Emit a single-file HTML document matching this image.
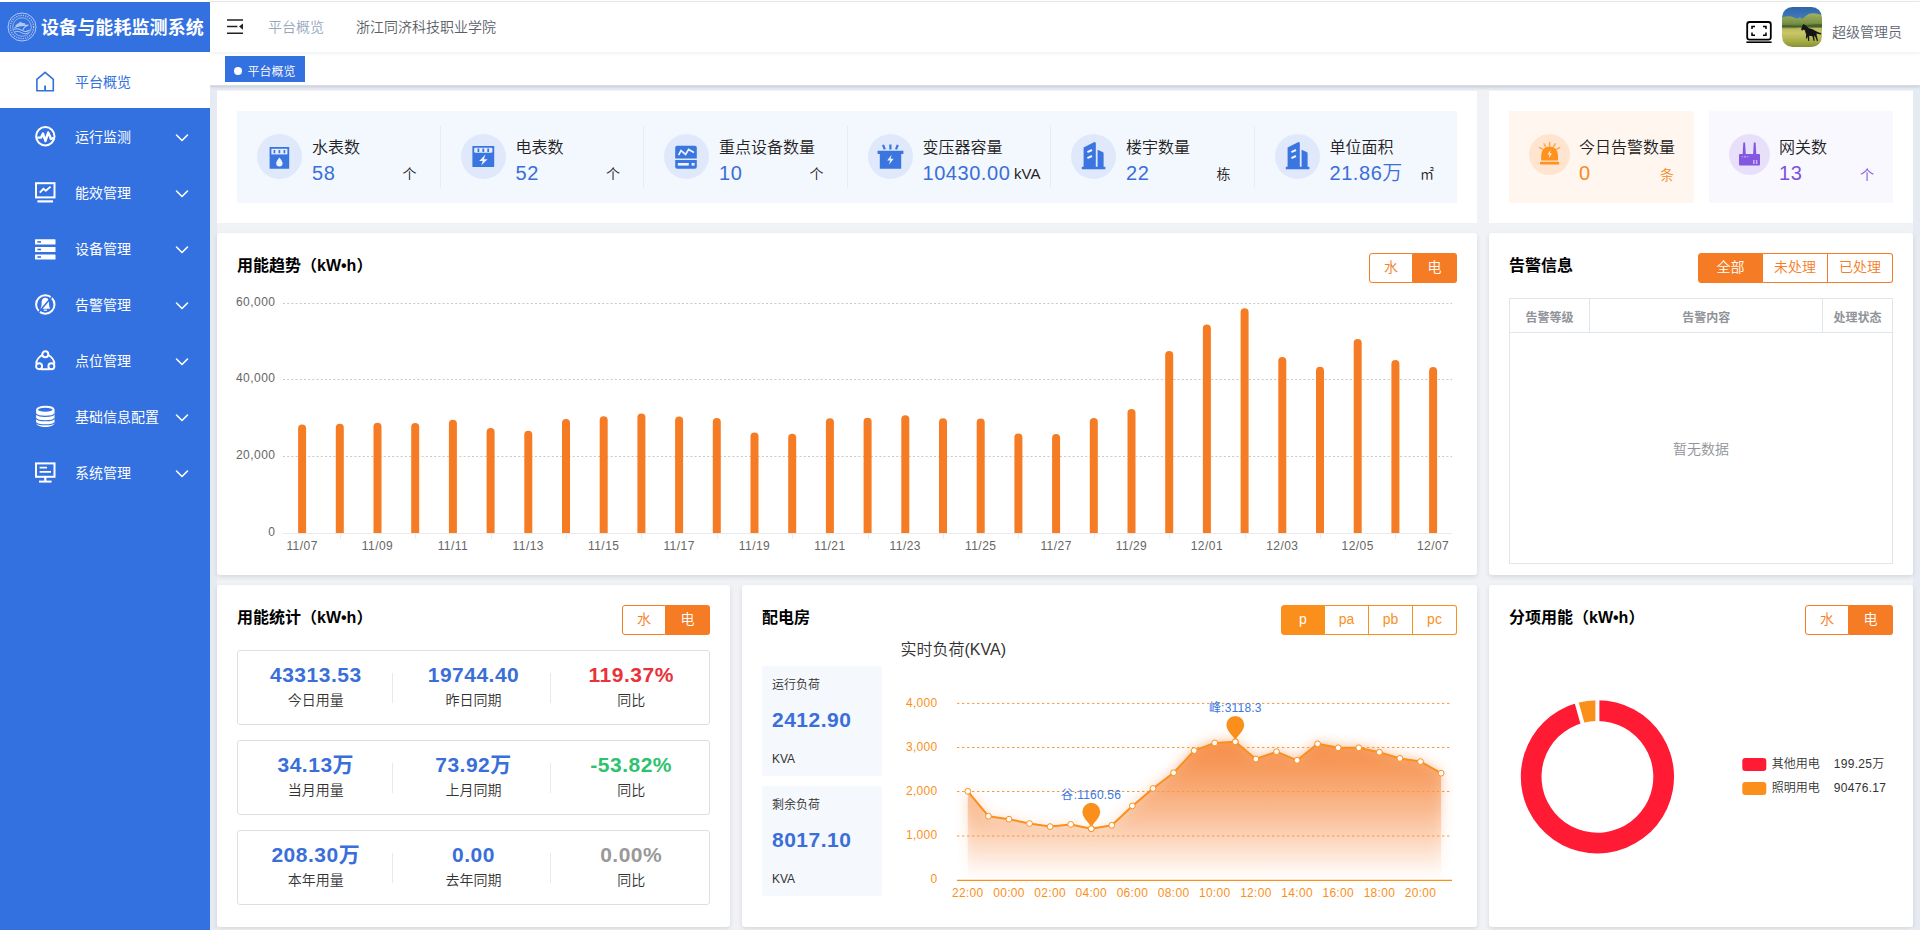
<!DOCTYPE html>
<html lang="zh-CN"><head><meta charset="utf-8"><title>设备与能耗监测系统</title>
<style>
*{box-sizing:border-box;margin:0;padding:0}
html,body{width:1920px;height:930px;overflow:hidden;background:#e6eaf3;}
#mainbg{position:absolute;left:217px;top:90px;width:1696px;height:840px;background:#f0f2f5}
body{font-family:"Liberation Sans","Noto Sans CJK SC",sans-serif;font-weight:350;color:#333;position:relative;font-size:14px;}
.abs{position:absolute}
#topline{position:absolute;left:0;top:0;width:1920px;height:2px;background:#fff}#topline i{position:absolute;left:210px;top:1px;width:1710px;height:1px;background:#ebebeb}
#side{position:absolute;left:0;top:2px;width:210px;height:928px;background:#3370e0;z-index:5}
#logo{position:absolute;left:0;top:0;width:210px;height:50px;}
#logo .t{position:absolute;left:41px;top:0.5px;height:50px;line-height:50px;font-size:18px;font-weight:bold;color:#fff;white-space:nowrap;letter-spacing:.1px;}
.mi{position:absolute;left:0;width:210px;height:56px;color:#fff;font-size:14px;line-height:56px;font-weight:400}
.mi .tx{position:absolute;left:75px;top:1px;white-space:nowrap}.mi.act .tx{top:2px}
.mi svg.ic{position:absolute;left:33px;top:16px;width:24px;height:24px}
.mi svg.ar{position:absolute;left:175px;top:24.5px;width:14px;height:10px}
.mi.act{background:#fff;color:#3370e0}
#head{position:absolute;left:210px;top:2px;width:1710px;height:50px;background:#fff;z-index:3;box-shadow:0 1px 4px rgba(0,21,41,.08);}
#tabs{position:absolute;left:210px;top:52px;width:1710px;height:34px;background:#fff;border-bottom:1px solid #d8dce5;box-shadow:0 1px 3px 0 rgba(0,0,0,.12),0 0 3px 0 rgba(0,0,0,.04);}
#tab1{position:absolute;left:15px;top:4px;width:80px;height:26px;background:#3370e0;color:#fff;font-size:12px;line-height:26px;}
#tab1 i{position:absolute;left:9px;top:11px;width:8px;height:8px;border-radius:50%;background:#fff}
#tab1 span{position:absolute;left:22.5px;top:2.5px;white-space:nowrap}
.card{position:absolute;background:#fff;border-radius:3px;box-shadow:0 2px 5px rgba(0,0,0,.11)}
.card.flat{border-radius:0;box-shadow:none}
.ttl{margin-top:1px;position:absolute;font-size:16px;font-weight:bold;color:#000;white-space:nowrap;line-height:24px}
.bg{position:absolute;height:30px;display:flex;font-size:14px;line-height:27px;color:#f57c24;}
.bg span{display:block;border:1px solid #f57c24;border-left-width:0;text-align:center;background:#fff}
.bg span:first-child{border-left-width:1px;border-radius:3px 0 0 3px}
.bg span:last-child{border-radius:0 3px 3px 0}
.bg span.on{background:#f57c24;color:#fff}
</style>
<style>
.sl{font-size:16px;line-height:22px;color:#222;white-space:nowrap}
.sv{font-size:20px;line-height:26px;white-space:nowrap;letter-spacing:.55px}
.su{font-size:14px;line-height:18px;white-space:nowrap}
</style><style>.th{width:80px;text-align:center;font-size:12px;font-weight:bold;color:#909399;line-height:20px;white-space:nowrap}
.nv{width:150px;text-align:center;font-size:21px;font-weight:bold;line-height:26px;white-space:nowrap;letter-spacing:.5px}
.nl{width:150px;text-align:center;font-size:14px;line-height:20px;color:#333;white-space:nowrap}
.nv2{font-size:21px;font-weight:bold;line-height:26px;color:#3a6fd9;white-space:nowrap;letter-spacing:.5px}
.bg2{color:#fb8f1c}.bg2 span{border-color:#fb8f1c}.bg2 span.on{background:#fb8f1c}
</style>

</head>
<body>
<div id="topline"><i></i></div>
<div id="side">
<div id="logo"><svg class="abs" style="left:7px;top:10px;width:30px;height:30px;opacity:.62" viewBox="0 0 30 30" fill="none" stroke="#fff">
<circle cx="15" cy="15" r="14" stroke-width="1"/>
<circle cx="15" cy="15" r="11.6" stroke-width="1.3" stroke-dasharray="1.2 1.1"/>
<circle cx="15" cy="15" r="9.3" stroke-width=".8"/>
<path d="M8 13.6 L12.5 10.6 L13.6 9.6 L14.6 10.8 L17.6 11.2 L19 12.2 L17 13 L10.5 14.2 Z" fill="#fff" stroke="none"/>
<path d="M7.5 15.6 C11 13.2 17 13.6 21.5 13 C18.5 14.2 16.6 15.6 16 18" stroke-width="1.1"/>
<path d="M6.6 17.6 C9.6 16 12.8 17 15 18.4 C17.5 20 20.5 19.6 22.6 18" stroke-width="1.1"/>
<path d="M7.6 20 C10.4 18.6 13 19.8 15 21 C17 22 19.8 21.8 21.6 20.6" stroke-width="1"/>
</svg>
<div class="t">设备与能耗监测系统</div></div>
<div class="mi act" style="top:50px"><svg class="ic" style="top:17.6px" viewBox="0 0 24 24" fill="none" stroke="#3370e0" stroke-width="1.6" stroke-linejoin="miter"><path d="M3.9 9.4 L12.1 2.4 L20.3 9.4 V20.8 H3.9 Z"/><path d="M12.1 20.6 V15.4" stroke-width="1.8"/></svg>
<span class="tx">平台概览</span></div>
<div class="mi" style="top:106px"><svg class="ic" viewBox="0 0 24 24" fill="none" stroke="#fff"><circle cx="12.3" cy="12.3" r="9.2" stroke-width="2"/><path d="M4.2 13.6 H8 L10 9.6 L12.5 17 L15.2 8.4 L18 15 L20.6 13.8" stroke-width="2.4" stroke-linejoin="round"/></svg>
<span class="tx">运行监测</span><svg class="ar" viewBox="0 0 14 10"><path d="M1.5 2 L7 7.5 L12.5 2" fill="none" stroke="#fff" stroke-width="1.6" stroke-linecap="round" stroke-linejoin="round"/></svg></div>
<div class="mi" style="top:162px"><svg class="ic" viewBox="0 0 24 24" fill="none" stroke="#fff"><rect x="3" y="3.2" width="18.5" height="14.2" stroke-width="2"/><path d="M6.8 12.6 L10.4 8.8 L12.8 10.8 L17.6 6.6" stroke-width="1.8"/><path d="M4.4 21.4 H20" stroke-width="2.2"/></svg>
<span class="tx">能效管理</span><svg class="ar" viewBox="0 0 14 10"><path d="M1.5 2 L7 7.5 L12.5 2" fill="none" stroke="#fff" stroke-width="1.6" stroke-linecap="round" stroke-linejoin="round"/></svg></div>
<div class="mi" style="top:218px"><svg class="ic" viewBox="0 0 24 24" fill="#fff" stroke="none"><rect x="2" y="3.3" width="20.5" height="5.2" rx=".6"/><rect x="2" y="10.9" width="20.5" height="5.2" rx=".6"/><rect x="2" y="18.4" width="20.5" height="5.2" rx=".6"/><rect x="4.4" y="5.1" width="3.6" height="1.6" fill="#3370e0"/><rect x="4.4" y="12.7" width="3.6" height="1.6" fill="#3370e0"/><rect x="4.4" y="20.2" width="3.6" height="1.6" fill="#3370e0"/></svg>
<span class="tx">设备管理</span><svg class="ar" viewBox="0 0 14 10"><path d="M1.5 2 L7 7.5 L12.5 2" fill="none" stroke="#fff" stroke-width="1.6" stroke-linecap="round" stroke-linejoin="round"/></svg></div>
<div class="mi" style="top:274px"><svg class="ic" viewBox="0 0 24 24" fill="none" stroke="#fff"><circle cx="12.3" cy="12.5" r="9.2" stroke-width="2"/><path d="M12.3 5.800 C9 5.800 8.600 9 8.600 11.600 C8.600 14.200 8 15.600 7.400 16.800 H17.200 C16.600 15.600 16 14.200 16 11.600 C16 9 15.600 5.800 12.300 5.800 Z M10.700 17.600 H13.900 V18.800 H10.700 Z" fill="#fff" stroke="none"/><path d="M19.400 4.200 L5.200 20.800" stroke="#3370e0" stroke-width="1.500"/></svg>
<span class="tx">告警管理</span><svg class="ar" viewBox="0 0 14 10"><path d="M1.5 2 L7 7.5 L12.5 2" fill="none" stroke="#fff" stroke-width="1.6" stroke-linecap="round" stroke-linejoin="round"/></svg></div>
<div class="mi" style="top:330px"><svg class="ic" viewBox="0 0 24 24" fill="none" stroke="#fff" stroke-width="1.9"><path d="M9.200 7 C5.400 9.400 3.400 12.400 3.100 15.600 M15.400 7 C19.200 9.400 21.200 12.400 21.500 15.600 M8 21.300 H16.600"/><circle cx="12.3" cy="6.200" r="3"/><circle cx="6.100" cy="18.200" r="3"/><circle cx="18.400" cy="18.200" r="3"/></svg>
<span class="tx">点位管理</span><svg class="ar" viewBox="0 0 14 10"><path d="M1.5 2 L7 7.5 L12.5 2" fill="none" stroke="#fff" stroke-width="1.6" stroke-linecap="round" stroke-linejoin="round"/></svg></div>
<div class="mi" style="top:386px"><svg class="ic" viewBox="0 0 24 24" fill="none" stroke="#fff"><path d="M3.1 6 V19 C3.1 21.200 7.100 23 12.300 23 C17.500 23 21.500 21.200 21.500 19 V6 Z" fill="#fff" stroke="none"/><ellipse cx="12.3" cy="5.800" rx="8.300" ry="3" fill="#3370e0" stroke="#fff" stroke-width="1.900"/><path d="M3.100 9.800 C4.600 13.200 20 13.200 21.500 9.800 M3.100 14.200 C4.600 17.600 20 17.600 21.500 14.200 M3.100 18.400 C4.600 21.600 20 21.600 21.500 18.400" stroke="#3370e0" stroke-width="1.100"/></svg>
<span class="tx">基础信息配置</span><svg class="ar" viewBox="0 0 14 10"><path d="M1.5 2 L7 7.5 L12.5 2" fill="none" stroke="#fff" stroke-width="1.6" stroke-linecap="round" stroke-linejoin="round"/></svg></div>
<div class="mi" style="top:442px"><svg class="ic" viewBox="0 0 24 24" fill="none" stroke="#fff"><rect x="3" y="3.4" width="18.5" height="13.4" stroke-width="2"/><path d="M6.6 7.6 H14 M6.6 11.8 H18" stroke-width="1.8"/><path d="M12.3 17 V21.4" stroke-width="2.2"/><path d="M6 21.6 H18.6" stroke-width="2"/></svg>
<span class="tx">系统管理</span><svg class="ar" viewBox="0 0 14 10"><path d="M1.5 2 L7 7.5 L12.5 2" fill="none" stroke="#fff" stroke-width="1.6" stroke-linecap="round" stroke-linejoin="round"/></svg></div>
</div>
<div id="head"><svg class="abs" style="left:17px;top:17px;width:16px;height:16px" viewBox="0 0 16 16" fill="none" stroke="#222" stroke-width="1.5"><path d="M0 1 H16 M0 7.6 H10.4 M0 14.2 H16"/><path d="M16 4.4 L12 7.6 L16 10.8 Z" fill="#222" stroke="none"/></svg>
<div class="abs" style="left:58px;top:0;height:50px;line-height:50px;font-size:14px;color:#97a8be;white-space:nowrap">平台概览</div>
<div class="abs" style="left:146px;top:0;height:50px;line-height:50px;font-size:14px;color:#5a5e66;white-space:nowrap">浙江同济科技职业学院</div>
<svg class="abs" style="left:1535px;top:18px;width:28px;height:24px" viewBox="0 0 28 24" fill="none" stroke="#000" stroke-width="1.8"><rect x="2.2" y="2" width="23.6" height="17.6" rx="2.4"/><path d="M1.4 22.2 H26.6" stroke-width="1.6"/><path d="M7 9 V6.4 H10 M18 6.4 H21 V9 M21 12.6 V15.2 H18 M10 15.2 H7 V12.6" stroke-width="1.5"/></svg>
<svg class="abs" style="left:1572px;top:5px;width:40px;height:40px" viewBox="0 0 40 40">
<defs><clipPath id="avc"><rect x="0" y="0" width="40" height="40" rx="10.5"/></clipPath>
<linearGradient id="sky" x1="0" y1="0" x2="0" y2="1"><stop offset="0" stop-color="#2a62a6"/><stop offset="1" stop-color="#4c86c4"/></linearGradient>
<linearGradient id="grs" x1="0" y1="0" x2="0" y2="1"><stop offset="0" stop-color="#b9b85c"/><stop offset=".25" stop-color="#c9c767"/><stop offset=".6" stop-color="#a9ae49"/><stop offset="1" stop-color="#77862b"/></linearGradient>
<linearGradient id="trs" x1="0" y1="0" x2="0" y2="1"><stop offset="0" stop-color="#a3b061"/><stop offset=".55" stop-color="#7c9446"/><stop offset="1" stop-color="#3f5c29"/></linearGradient>
<filter id="avb"><feGaussianBlur stdDeviation=".45"/></filter></defs>
<g clip-path="url(#avc)"><g filter="url(#avb)"><rect x="-2" y="-2" width="44" height="20" fill="url(#sky)"/>
<path d="M-2 11.5 C3 8.6 8 8.8 12 10.4 C14.6 11.4 16.4 11.8 17.4 10.8 L18 9.400 L18.8 11.4 C20.4 12.200 22 10.800 24 8.800 C28 5.400 34 5.600 42 8.800 V23 H-2 Z" fill="url(#trs)"/>
<path d="M-2 18.600 C6 17.600 12 18.600 20 18.400 C26 17.800 34 16.800 42 17.400 V23 H-2 Z" fill="#3d5a2a" opacity=".75"/>
<rect x="-2" y="20.600" width="44" height="22" fill="url(#grs)"/>
<rect x="-2" y="20.200" width="18" height="1.200" fill="#6f7f42" opacity=".7"/>
<path d="M19 22.400 L20.400 18.800 L21.400 17 L22.200 17.600 C24 18.600 25.200 20 26.400 21 C28.600 21.600 31 22.200 33.200 23.800 C35.200 25 37.200 25.800 39.200 26 L39 27.400 C37 27.400 35.400 26.800 34.600 26.200 L34.800 29 L36 33.800 L35 34.200 L33.400 30 L32.200 28.600 L32.600 33.800 L31.600 34 L30.400 29.200 L27.200 28.800 L27.200 34 L26.200 34 L25.600 29.400 L24.800 31.600 L23.800 31.400 L24.200 27.400 C23.600 26.400 23.200 25 23 23.600 L21.800 22.600 L20.400 23.600 Z" fill="#121317"/></g></g></svg>
<div class="abs" style="left:1622px;top:17px;height:26px;line-height:26px;font-size:14px;color:#5f6570;white-space:nowrap">超级管理员</div>
</div>
<div id="tabs"><div id="tab1"><i></i><span>平台概览</span></div></div>
<div id="mainbg"></div>
<div class="card flat" id="c1" style="left:217px;top:91px;width:1260px;height:132px"><div class="abs" style="left:20px;top:20px;width:1220px;height:92px;background:#f3f7fe"></div><svg class="abs" style="left:40.0px;top:42.5px;width:45px;height:45px" viewBox="0 0 45 45"><circle cx="22.5" cy="22.5" r="22.5" fill="#dfe9fb"/><rect x="12.6" y="13" width="19.6" height="21.8" rx=".6" fill="#3a75e0"/><rect x="14.4" y="14.8" width="16" height="5.6" fill="#e6eefc"/><path d="M17.4 16 V19.2 M22.4 16 V19.2 M27.4 16 V19.2" stroke="#3a75e0" stroke-width="1.7"/><path d="M22.4 23.4 C24 25.6 25.6 27.4 25.6 29.2 A3.2 3.2 0 0 1 19.2 29.2 C19.2 27.4 20.8 25.6 22.4 23.4 Z" fill="#eef3fd"/></svg><div class="abs sl" style="left:95px;top:46px">水表数</div><div class="abs sv" style="left:95px;top:69px;color:#3a6fd9">58</div><div class="abs su" style="left:185.5px;top:74.4px;color:#222">个</div><div class="abs" style="left:222.7px;top:35px;width:1px;height:62px;background:#e9ecf2"></div><svg class="abs" style="left:243.5px;top:42.5px;width:45px;height:45px" viewBox="0 0 45 45"><circle cx="22.5" cy="22.5" r="22.5" fill="#dfe9fb"/><rect x="11.4" y="12" width="21.8" height="21" rx=".6" fill="#3a75e0"/><rect x="13.2" y="13.8" width="18.2" height="5" rx="1" fill="#e6eefc"/><path d="M17.4 14.6 V18 M22.3 14.6 V18 M27.2 14.6 V18" stroke="#3a75e0" stroke-width="1.8"/><path d="M24.4 20.6 L18.2 27 H21.8 L20.2 31.6 L26.6 25.2 H23 Z" fill="#eef3fd"/></svg><div class="abs sl" style="left:298.5px;top:46px">电表数</div><div class="abs sv" style="left:298.5px;top:69px;color:#3a6fd9">52</div><div class="abs su" style="left:389px;top:74.4px;color:#222">个</div><div class="abs" style="left:426.2px;top:35px;width:1px;height:62px;background:#e9ecf2"></div><svg class="abs" style="left:447.0px;top:42.5px;width:45px;height:45px" viewBox="0 0 45 45"><circle cx="22.5" cy="22.5" r="22.5" fill="#dfe9fb"/><path d="M13.2 11.8 H30.8 A2 2 0 0 1 32.8 13.8 V24.4 H11.2 V13.8 A2 2 0 0 1 13.2 11.8 Z" fill="#3a75e0"/><path d="M11.2 26.1 H32.8 V32.7 A2 2 0 0 1 30.8 34.7 H13.2 A2 2 0 0 1 11.2 32.700 Z" fill="#3a75e0"/><path d="M14.6 21.2 L17 16.6 L21.6 20.4 L24.6 15.4 L30 18.6" fill="none" stroke="#eef3fd" stroke-width="1.7"/><rect x="13.8" y="29" width="11" height="2.6" fill="#eef3fd"/><rect x="27.6" y="29" width="3" height="2.6" fill="#eef3fd"/></svg><div class="abs sl" style="left:502px;top:46px">重点设备数量</div><div class="abs sv" style="left:502px;top:69px;color:#3a6fd9">10</div><div class="abs su" style="left:592.5px;top:74.4px;color:#222">个</div><div class="abs" style="left:629.7px;top:35px;width:1px;height:62px;background:#e9ecf2"></div><svg class="abs" style="left:650.5px;top:42.5px;width:45px;height:45px" viewBox="0 0 45 45"><circle cx="22.5" cy="22.500" r="22.5" fill="#dfe9fb"/><path d="M9.600 16.800 H35.400 V20 H33.200 V34.800 H11.800 V20 H9.600 Z" fill="#3a75e0"/><path d="M15 10.800 L16.800 15.400 M22.400 10.600 V15.600 M29.800 10.800 L28 15.400" stroke="#3a75e0" stroke-width="2.200"/><path d="M23.600 20.800 L19.200 26.600 H22.200 L21 30.800 L25.600 24.800 H22.600 Z" fill="#eef3fd"/></svg><div class="abs sl" style="left:705.5px;top:46px">变压器容量</div><div class="abs sv" style="left:705.5px;top:69px;color:#3a6fd9">10430.00</div><div class="abs su" style="left:797px;top:74px;color:#222;font-size:15px">kVA</div><div class="abs" style="left:833.2px;top:35px;width:1px;height:62px;background:#e9ecf2"></div><svg class="abs" style="left:854.0px;top:42.5px;width:45px;height:45px" viewBox="0 0 45 45"><circle cx="22.5" cy="22.5" r="22.5" fill="#dfe9fb"/><path d="M12.600 33 V13.400 L23 8.200 Q24.600 7.800 24.800 9.400 V33 Z" fill="#3a75e0"/><path d="M26.600 33 V15.800 L31.600 18 Q32.600 18.400 32.600 19.400 V33 Z" fill="#3a75e0"/><rect x="10.800" y="32.800" width="23.600" height="2.500" rx=".6" fill="#3a75e0"/><path d="M16.400 18.200 L21 16 M16.400 24.200 L21 22" stroke="#eef3fd" stroke-width="2"/></svg><div class="abs sl" style="left:909px;top:46px">楼宇数量</div><div class="abs sv" style="left:909px;top:69px;color:#3a6fd9">22</div><div class="abs su" style="left:999.5px;top:74.4px;color:#222">栋</div><div class="abs" style="left:1036.7px;top:35px;width:1px;height:62px;background:#e9ecf2"></div><svg class="abs" style="left:1057.5px;top:42.5px;width:45px;height:45px" viewBox="0 0 45 45"><circle cx="22.5" cy="22.5" r="22.5" fill="#dfe9fb"/><path d="M12.600 33 V13.400 L23 8.200 Q24.600 7.800 24.800 9.400 V33 Z" fill="#3a75e0"/><path d="M26.600 33 V15.800 L31.600 18 Q32.600 18.400 32.600 19.400 V33 Z" fill="#3a75e0"/><rect x="10.800" y="32.800" width="23.600" height="2.500" rx=".6" fill="#3a75e0"/><path d="M16.400 18.200 L21 16 M16.400 24.200 L21 22" stroke="#eef3fd" stroke-width="2"/></svg><div class="abs sl" style="left:1112.5px;top:46px">单位面积</div><div class="abs sv" style="left:1112.5px;top:69px;color:#3a6fd9">21.86万</div><div class="abs su" style="left:1203px;top:74.4px;color:#222">㎡</div></div>
<div class="card flat" id="c2" style="left:1489px;top:91px;width:424px;height:132px"><div class="abs" style="left:20px;top:20px;width:185px;height:92px;background:#fff6f0"></div><div class="abs" style="left:220px;top:20px;width:184px;height:92px;background:#faf8ff"></div><svg class="abs" style="left:40px;top:43.1px;width:41px;height:41px" viewBox="0 0 41 41"><circle cx="20.5" cy="20.5" r="20.5" fill="#ffe5cf"/><path d="M12.200 26.400 V20.800 A8.400 8.400 0 0 1 29 20.800 V26.400 Z" fill="#ff921e"/><rect x="11" y="27.800" width="19.200" height="2.700" rx=".6" fill="#ff921e"/><path d="M20.600 8.600 V12 M15 9.800 L16.600 12.600 M26.200 9.800 L24.600 12.600 M10.600 13.600 L13.400 15.200 M30.600 13.600 L27.800 15.200" stroke="#ffa64a" stroke-width="1.500" stroke-linecap="round"/><path d="M21.600 16 L18.400 20.600 H20.600 L19.800 24 L23 19.600 H20.800 Z" fill="#fff0e0"/></svg><div class="abs sl" style="left:90px;top:46px">今日告警数量</div><div class="abs sv" style="left:90px;top:69px;color:#f58a1f">0</div><div class="abs su" style="left:171px;top:75.4px;color:#f58a1f">条</div><svg class="abs" style="left:240px;top:43.1px;width:41px;height:41px" viewBox="0 0 41 41"><circle cx="20.5" cy="20.5" r="20.5" fill="#e8e0fa"/><rect x="10" y="20" width="21" height="11.400" rx="1" fill="#8358e0"/><path d="M14.300 8.600 H16.100 L16.800 20.200 H13.600 Z M24.800 8.600 H26.600 L27.300 20.200 H24.100 Z" fill="#8358e0"/><path d="M12.800 22.800 H13.800 M15.200 22.800 H17 M18.400 22.800 H19.400" stroke="#d9ccf6" stroke-width="1"/><path d="M24.800 26 V30 M27.600 26 V30" stroke="#cbbbf2" stroke-width="1.400"/></svg><div class="abs sl" style="left:290px;top:46px">网关数</div><div class="abs sv" style="left:290px;top:69px;color:#7b52dd">13</div><div class="abs su" style="left:371px;top:75.4px;color:#7b52dd">个</div></div>
<div class="card" id="c3" style="left:217px;top:233px;width:1260px;height:342px"><div class="ttl" style="left:20px;top:20px">用能趋势（kW•h）</div><div class="bg" style="left:1152px;top:20px"><span style="width:44px">水</span><span class="on" style="width:44px">电</span></div><svg class="abs" style="left:0;top:0;width:1260px;height:342px" viewBox="0 0 1260 342" font-family="Liberation Sans, sans-serif" font-size="12" fill="#666" letter-spacing=".45"><text x="58.4" y="303.2" text-anchor="end">0</text><path d="M66.0 223.5 H1235.0" stroke="#c9c9c9" stroke-width="1" stroke-dasharray="2 2.2" fill="none"/><text x="58.4" y="226.3" text-anchor="end">20,000</text><path d="M66.0 146.5 H1235.0" stroke="#c9c9c9" stroke-width="1" stroke-dasharray="2 2.2" fill="none"/><text x="58.4" y="149.3" text-anchor="end">40,000</text><path d="M66.0 70.5 H1235.0" stroke="#c9c9c9" stroke-width="1" stroke-dasharray="2 2.2" fill="none"/><text x="58.4" y="72.7" text-anchor="end">60,000</text><path d="M66.0 300.5 H1235.0" stroke="#e9eaee" stroke-width="1" fill="none"/><g fill="#f57c24"><path d="M81.10 300.00 V195.60 A4 4 0 0 1 89.10 195.60 V300.00 Z"/><path d="M118.80 300.00 V194.75 A4 4 0 0 1 126.80 194.75 V300.00 Z"/><path d="M156.50 300.00 V193.70 A4 4 0 0 1 164.50 193.70 V300.00 Z"/><path d="M194.20 300.00 V193.90 A4 4 0 0 1 202.20 193.90 V300.00 Z"/><path d="M231.90 300.00 V190.80 A4 4 0 0 1 239.90 190.80 V300.00 Z"/><path d="M269.60 300.00 V198.90 A4 4 0 0 1 277.60 198.90 V300.00 Z"/><path d="M307.30 300.00 V201.80 A4 4 0 0 1 315.30 201.80 V300.00 Z"/><path d="M345.00 300.00 V190.00 A4 4 0 0 1 353.00 190.00 V300.00 Z"/><path d="M382.70 300.00 V187.25 A4 4 0 0 1 390.70 187.25 V300.00 Z"/><path d="M420.40 300.00 V184.50 A4 4 0 0 1 428.40 184.50 V300.00 Z"/><path d="M458.10 300.00 V187.50 A4 4 0 0 1 466.10 187.50 V300.00 Z"/><path d="M495.80 300.00 V189.10 A4 4 0 0 1 503.80 189.10 V300.00 Z"/><path d="M533.50 300.00 V203.50 A4 4 0 0 1 541.50 203.50 V300.00 Z"/><path d="M571.20 300.00 V204.75 A4 4 0 0 1 579.20 204.75 V300.00 Z"/><path d="M608.90 300.00 V189.30 A4 4 0 0 1 616.90 189.30 V300.00 Z"/><path d="M646.60 300.00 V188.70 A4 4 0 0 1 654.60 188.70 V300.00 Z"/><path d="M684.30 300.00 V186.20 A4 4 0 0 1 692.30 186.20 V300.00 Z"/><path d="M722.00 300.00 V189.30 A4 4 0 0 1 730.00 189.30 V300.00 Z"/><path d="M759.70 300.00 V189.50 A4 4 0 0 1 767.70 189.50 V300.00 Z"/><path d="M797.40 300.00 V204.50 A4 4 0 0 1 805.40 204.50 V300.00 Z"/><path d="M835.10 300.00 V205.00 A4 4 0 0 1 843.10 205.00 V300.00 Z"/><path d="M872.80 300.00 V189.10 A4 4 0 0 1 880.80 189.10 V300.00 Z"/><path d="M910.50 300.00 V180.00 A4 4 0 0 1 918.50 180.00 V300.00 Z"/><path d="M948.20 300.00 V122.00 A4 4 0 0 1 956.20 122.00 V300.00 Z"/><path d="M985.90 300.00 V95.60 A4 4 0 0 1 993.90 95.60 V300.00 Z"/><path d="M1023.60 300.00 V79.30 A4 4 0 0 1 1031.60 79.30 V300.00 Z"/><path d="M1061.30 300.00 V127.90 A4 4 0 0 1 1069.30 127.90 V300.00 Z"/><path d="M1099.00 300.00 V137.70 A4 4 0 0 1 1107.00 137.70 V300.00 Z"/><path d="M1136.70 300.00 V110.00 A4 4 0 0 1 1144.70 110.00 V300.00 Z"/><path d="M1174.40 300.00 V131.00 A4 4 0 0 1 1182.40 131.00 V300.00 Z"/><path d="M1212.10 300.00 V138.10 A4 4 0 0 1 1220.10 138.10 V300.00 Z"/></g><text x="85.1" y="316.8" text-anchor="middle">11/07</text><path d="M123.5 301.0 V306.0" stroke="#ebecef" stroke-width="1"/><text x="160.5" y="316.8" text-anchor="middle">11/09</text><path d="M198.5 301.0 V306.0" stroke="#ebecef" stroke-width="1"/><text x="235.9" y="316.8" text-anchor="middle">11/11</text><path d="M274.5 301.0 V306.0" stroke="#ebecef" stroke-width="1"/><text x="311.3" y="316.8" text-anchor="middle">11/13</text><path d="M349.5 301.0 V306.0" stroke="#ebecef" stroke-width="1"/><text x="386.7" y="316.8" text-anchor="middle">11/15</text><path d="M424.5 301.0 V306.0" stroke="#ebecef" stroke-width="1"/><text x="462.1" y="316.8" text-anchor="middle">11/17</text><path d="M500.5 301.0 V306.0" stroke="#ebecef" stroke-width="1"/><text x="537.5" y="316.8" text-anchor="middle">11/19</text><path d="M575.5 301.0 V306.0" stroke="#ebecef" stroke-width="1"/><text x="612.9" y="316.8" text-anchor="middle">11/21</text><path d="M651.5 301.0 V306.0" stroke="#ebecef" stroke-width="1"/><text x="688.3" y="316.8" text-anchor="middle">11/23</text><path d="M726.5 301.0 V306.0" stroke="#ebecef" stroke-width="1"/><text x="763.7" y="316.8" text-anchor="middle">11/25</text><path d="M801.5 301.0 V306.0" stroke="#ebecef" stroke-width="1"/><text x="839.1" y="316.8" text-anchor="middle">11/27</text><path d="M877.5 301.0 V306.0" stroke="#ebecef" stroke-width="1"/><text x="914.5" y="316.8" text-anchor="middle">11/29</text><path d="M952.5 301.0 V306.0" stroke="#ebecef" stroke-width="1"/><text x="989.9" y="316.8" text-anchor="middle">12/01</text><path d="M1028.5 301.0 V306.0" stroke="#ebecef" stroke-width="1"/><text x="1065.3" y="316.8" text-anchor="middle">12/03</text><path d="M1103.5 301.0 V306.0" stroke="#ebecef" stroke-width="1"/><text x="1140.7" y="316.8" text-anchor="middle">12/05</text><path d="M1178.5 301.0 V306.0" stroke="#ebecef" stroke-width="1"/><text x="1216.1" y="316.8" text-anchor="middle">12/07</text></svg></div>
<div class="card" id="c4" style="left:1489px;top:233px;width:424px;height:342px"><div class="ttl" style="left:20px;top:20px">告警信息</div><div class="bg" style="left:209px;top:20px"><span class="on" style="width:65px">全部</span><span style="width:65px">未处理</span><span style="width:65px">已处理</span></div><div class="abs" style="left:20px;top:65px;width:384px;height:266px;border:1px solid #dfe6ec"></div><div class="abs" style="left:20px;top:65px;width:384px;height:35px;border-bottom:1px solid #dfe6ec"></div><div class="abs" style="left:100px;top:65px;width:1px;height:35px;background:#dfe6ec"></div><div class="abs" style="left:333px;top:65px;width:1px;height:35px;background:#dfe6ec"></div><div class="abs th" style="left:20.6px;top:74.5px">告警等级</div><div class="abs th" style="left:177.2px;top:74.5px">告警内容</div><div class="abs th" style="left:328.5px;top:74.5px">处理状态</div><div class="abs" style="left:152px;top:205px;width:120px;text-align:center;font-size:14px;line-height:22px;color:#909399">暂无数据</div></div>
<div class="card" id="c5" style="left:217px;top:585px;width:513px;height:342px"><div class="ttl" style="left:20px;top:20px">用能统计（kW•h）</div><div class="bg" style="left:405px;top:20px"><span style="width:44px">水</span><span class="on" style="width:44px">电</span></div><div class="abs" style="left:20px;top:65px;width:473px;height:75px;border:1px solid #dcdfe6;border-radius:3px"></div><div class="abs nv" style="left:23.8px;top:77px;color:#3a6fd9">43313.53</div><div class="abs nl" style="left:23.8px;top:105px">今日用量</div><div class="abs" style="left:175.2px;top:88px;width:1px;height:30px;background:#e6e9ef"></div><div class="abs nv" style="left:181.5px;top:77px;color:#3a6fd9">19744.40</div><div class="abs nl" style="left:181.5px;top:105px">昨日同期</div><div class="abs" style="left:332.8px;top:88px;width:1px;height:30px;background:#e6e9ef"></div><div class="abs nv" style="left:339.2px;top:77px;color:#e9323c">119.37%</div><div class="abs nl" style="left:339.2px;top:105px">同比</div><div class="abs" style="left:20px;top:155px;width:473px;height:75px;border:1px solid #dcdfe6;border-radius:3px"></div><div class="abs nv" style="left:23.8px;top:167px;color:#3a6fd9">34.13万</div><div class="abs nl" style="left:23.8px;top:195px">当月用量</div><div class="abs" style="left:175.2px;top:178px;width:1px;height:30px;background:#e6e9ef"></div><div class="abs nv" style="left:181.5px;top:167px;color:#3a6fd9">73.92万</div><div class="abs nl" style="left:181.5px;top:195px">上月同期</div><div class="abs" style="left:332.8px;top:178px;width:1px;height:30px;background:#e6e9ef"></div><div class="abs nv" style="left:339.2px;top:167px;color:#2fc26e">-53.82%</div><div class="abs nl" style="left:339.2px;top:195px">同比</div><div class="abs" style="left:20px;top:245px;width:473px;height:75px;border:1px solid #dcdfe6;border-radius:3px"></div><div class="abs nv" style="left:23.8px;top:257px;color:#3a6fd9">208.30万</div><div class="abs nl" style="left:23.8px;top:285px">本年用量</div><div class="abs" style="left:175.2px;top:268px;width:1px;height:30px;background:#e6e9ef"></div><div class="abs nv" style="left:181.5px;top:257px;color:#3a6fd9">0.00</div><div class="abs nl" style="left:181.5px;top:285px">去年同期</div><div class="abs" style="left:332.8px;top:268px;width:1px;height:30px;background:#e6e9ef"></div><div class="abs nv" style="left:339.2px;top:257px;color:#999">0.00%</div><div class="abs nl" style="left:339.2px;top:285px">同比</div></div>
<div class="card" id="c6" style="left:742px;top:585px;width:735px;height:342px"><div class="ttl" style="left:20px;top:20px">配电房</div><div class="bg bg2" style="left:539px;top:20px"><span class="on" style="width:44px">p</span><span style="width:44px">pa</span><span style="width:44px">pb</span><span style="width:44px">pc</span></div><div class="abs" style="left:158.5px;top:52.5px;font-size:16px;line-height:24px;color:#333;white-space:nowrap">实时负荷(KVA)</div><div class="abs" style="left:20px;top:81px;width:120px;height:110px;background:#f5f8fd;border-radius:2px"></div><div class="abs" style="left:30px;top:91px;font-size:12px;line-height:18px;color:#333;white-space:nowrap">运行负荷</div><div class="abs nv2" style="left:30px;top:122px">2412.90</div><div class="abs" style="left:30px;top:165px;font-size:12px;line-height:18px;color:#333">KVA</div><div class="abs" style="left:20px;top:201px;width:120px;height:110px;background:#f5f8fd;border-radius:2px"></div><div class="abs" style="left:30px;top:211px;font-size:12px;line-height:18px;color:#333;white-space:nowrap">剩余负荷</div><div class="abs nv2" style="left:30px;top:242px">8017.10</div><div class="abs" style="left:30px;top:285px;font-size:12px;line-height:18px;color:#333">KVA</div><svg class="abs" style="left:0;top:0;width:735px;height:342px" viewBox="0 0 735 342" font-family="Liberation Sans, sans-serif" font-size="12"><defs><linearGradient id="ag" gradientUnits="userSpaceOnUse" x1="0" y1="156.0" x2="0" y2="293.0"><stop offset="0" stop-color="#f5853a" stop-opacity=".8"/><stop offset="1" stop-color="#f79a5c" stop-opacity="0"/></linearGradient><filter id="gl" x="-5%" y="-20%" width="110%" height="140%"><feGaussianBlur stdDeviation="6.5"/></filter></defs><clipPath id="cp6"><rect x="205.0" y="80" width="520" height="215.0"/></clipPath><g clip-path="url(#cp6)"><path d="M225.8 295.0 L225.8 206.3 L246.4 231.2 L267.0 234.2 L287.5 238.5 L308.1 241.6 L328.7 239.4 L349.3 243.7 L369.8 240.3 L390.4 220.9 L411.0 203.5 L431.6 187.8 L452.2 165.6 L472.7 157.9 L493.3 156.8 L513.9 174.0 L534.5 166.7 L555.1 175.3 L575.6 158.8 L596.2 162.8 L616.8 162.8 L637.4 167.2 L657.9 173.4 L678.5 176.6 L699.1 188.2 L699.1 295.0 Z" fill="url(#ag)" filter="url(#gl)" opacity=".9"/><path d="M225.8 295.0 L225.8 206.3 L246.4 231.2 L267.0 234.2 L287.5 238.5 L308.1 241.6 L328.7 239.4 L349.3 243.7 L369.8 240.3 L390.4 220.9 L411.0 203.5 L431.6 187.8 L452.2 165.6 L472.7 157.9 L493.3 156.8 L513.9 174.0 L534.5 166.7 L555.1 175.3 L575.6 158.8 L596.2 162.8 L616.8 162.8 L637.4 167.2 L657.9 173.4 L678.5 176.6 L699.1 188.2 L699.1 295.0 Z" fill="url(#ag)"/></g><path d="M215.0 118.4 H710.0" stroke="#f79a3a" stroke-width="1" stroke-dasharray="2.4 2.6" fill="none"/><path d="M215.0 162.5 H710.0" stroke="#f79a3a" stroke-width="1" stroke-dasharray="2.4 2.6" fill="none"/><path d="M215.0 206.5 H710.0" stroke="#f79a3a" stroke-width="1" stroke-dasharray="2.4 2.6" fill="none"/><path d="M215.0 251.0 H710.0" stroke="#f79a3a" stroke-width="1" stroke-dasharray="2.4 2.6" fill="none"/><path d="M215.0 295.3 H710.0" stroke="#fb8f1c" stroke-width="1.2" fill="none"/><text x="195.5" y="121.8" text-anchor="end" fill="#fb8f1c" letter-spacing=".3">4,000</text><text x="195.5" y="165.9" text-anchor="end" fill="#fb8f1c" letter-spacing=".3">3,000</text><text x="195.5" y="209.9" text-anchor="end" fill="#fb8f1c" letter-spacing=".3">2,000</text><text x="195.5" y="254.4" text-anchor="end" fill="#fb8f1c" letter-spacing=".3">1,000</text><text x="195.5" y="298.4" text-anchor="end" fill="#fb8f1c" letter-spacing=".3">0</text><path d="M225.8 206.3 L246.4 231.2 L267.0 234.2 L287.5 238.5 L308.1 241.6 L328.7 239.4 L349.3 243.7 L369.8 240.3 L390.4 220.9 L411.0 203.5 L431.6 187.8 L452.2 165.6 L472.7 157.9 L493.3 156.8 L513.9 174.0 L534.5 166.7 L555.1 175.3 L575.6 158.8 L596.2 162.8 L616.8 162.8 L637.4 167.2 L657.9 173.4 L678.5 176.6 L699.1 188.2" fill="none" stroke="#fb8f1c" stroke-width="2" stroke-linejoin="round"/><circle cx="225.8" cy="206.3" r="2.9" fill="#fff" stroke="#fb8f1c" stroke-width="1"/><circle cx="246.4" cy="231.2" r="2.9" fill="#fff" stroke="#fb8f1c" stroke-width="1"/><circle cx="267.0" cy="234.2" r="2.9" fill="#fff" stroke="#fb8f1c" stroke-width="1"/><circle cx="287.5" cy="238.5" r="2.9" fill="#fff" stroke="#fb8f1c" stroke-width="1"/><circle cx="308.1" cy="241.6" r="2.9" fill="#fff" stroke="#fb8f1c" stroke-width="1"/><circle cx="328.7" cy="239.4" r="2.9" fill="#fff" stroke="#fb8f1c" stroke-width="1"/><circle cx="349.3" cy="243.7" r="2.9" fill="#fff" stroke="#fb8f1c" stroke-width="1"/><circle cx="369.8" cy="240.3" r="2.9" fill="#fff" stroke="#fb8f1c" stroke-width="1"/><circle cx="390.4" cy="220.9" r="2.9" fill="#fff" stroke="#fb8f1c" stroke-width="1"/><circle cx="411.0" cy="203.5" r="2.9" fill="#fff" stroke="#fb8f1c" stroke-width="1"/><circle cx="431.6" cy="187.8" r="2.9" fill="#fff" stroke="#fb8f1c" stroke-width="1"/><circle cx="452.2" cy="165.6" r="2.9" fill="#fff" stroke="#fb8f1c" stroke-width="1"/><circle cx="472.7" cy="157.9" r="2.9" fill="#fff" stroke="#fb8f1c" stroke-width="1"/><circle cx="493.3" cy="156.8" r="2.9" fill="#fff" stroke="#fb8f1c" stroke-width="1"/><circle cx="513.9" cy="174.0" r="2.9" fill="#fff" stroke="#fb8f1c" stroke-width="1"/><circle cx="534.5" cy="166.7" r="2.9" fill="#fff" stroke="#fb8f1c" stroke-width="1"/><circle cx="555.1" cy="175.3" r="2.9" fill="#fff" stroke="#fb8f1c" stroke-width="1"/><circle cx="575.6" cy="158.8" r="2.9" fill="#fff" stroke="#fb8f1c" stroke-width="1"/><circle cx="596.2" cy="162.8" r="2.9" fill="#fff" stroke="#fb8f1c" stroke-width="1"/><circle cx="616.8" cy="162.8" r="2.9" fill="#fff" stroke="#fb8f1c" stroke-width="1"/><circle cx="637.4" cy="167.2" r="2.9" fill="#fff" stroke="#fb8f1c" stroke-width="1"/><circle cx="657.9" cy="173.4" r="2.9" fill="#fff" stroke="#fb8f1c" stroke-width="1"/><circle cx="678.5" cy="176.6" r="2.9" fill="#fff" stroke="#fb8f1c" stroke-width="1"/><circle cx="699.1" cy="188.2" r="2.9" fill="#fff" stroke="#fb8f1c" stroke-width="1"/><path d="M349.3 242.2 C346.8 237.2 340.4 232.7 340.4 226.7 A8.9 8.9 0 1 1 358.2 226.7 C358.2 232.7 351.8 237.2 349.3 242.2 Z" fill="#fb8f1c"/><text x="349.3" y="214.3" text-anchor="middle" fill="#3a75e0" letter-spacing=".2">谷:1160.56</text><path d="M493.3 155.3 C490.8 150.3 484.4 145.8 484.4 139.8 A8.9 8.9 0 1 1 502.2 139.8 C502.2 145.8 495.8 150.3 493.3 155.3 Z" fill="#fb8f1c"/><text x="493.3" y="127.4" text-anchor="middle" fill="#3a75e0" letter-spacing=".2">峰:3118.3</text><circle cx="349.3" cy="243.7" r="2.9" fill="#fff" fill-opacity=".85" stroke="#fb8f1c" stroke-width="1"/><circle cx="493.3" cy="156.8" r="2.9" fill="#fff" fill-opacity=".85" stroke="#fb8f1c" stroke-width="1"/><text x="225.8" y="311.8" text-anchor="middle" fill="#fb8f1c" letter-spacing=".3">22:00</text><text x="267.0" y="311.8" text-anchor="middle" fill="#fb8f1c" letter-spacing=".3">00:00</text><text x="308.1" y="311.8" text-anchor="middle" fill="#fb8f1c" letter-spacing=".3">02:00</text><text x="349.3" y="311.8" text-anchor="middle" fill="#fb8f1c" letter-spacing=".3">04:00</text><text x="390.4" y="311.8" text-anchor="middle" fill="#fb8f1c" letter-spacing=".3">06:00</text><text x="431.6" y="311.8" text-anchor="middle" fill="#fb8f1c" letter-spacing=".3">08:00</text><text x="472.7" y="311.8" text-anchor="middle" fill="#fb8f1c" letter-spacing=".3">10:00</text><text x="513.9" y="311.8" text-anchor="middle" fill="#fb8f1c" letter-spacing=".3">12:00</text><text x="555.1" y="311.8" text-anchor="middle" fill="#fb8f1c" letter-spacing=".3">14:00</text><text x="596.2" y="311.8" text-anchor="middle" fill="#fb8f1c" letter-spacing=".3">16:00</text><text x="637.4" y="311.8" text-anchor="middle" fill="#fb8f1c" letter-spacing=".3">18:00</text><text x="678.5" y="311.8" text-anchor="middle" fill="#fb8f1c" letter-spacing=".3">20:00</text></svg></div>
<div class="card" id="c7" style="left:1489px;top:585px;width:424px;height:342px"><div class="ttl" style="left:20px;top:20px">分项用能（kW•h）</div><div class="bg" style="left:316px;top:20px"><span style="width:44px">水</span><span class="on" style="width:44px">电</span></div><svg class="abs" style="left:0;top:0;width:424px;height:342px" viewBox="0 0 424 342" font-family="Liberation Sans, Noto Sans CJK SC, sans-serif" font-size="12"><path d="M108.40 115.20 A76.60 76.60 0 1 1 87.75 118.04 L93.33 137.97 A55.90 55.90 0 1 0 108.40 135.90 Z" fill="#ff1b33"/><path d="M87.75 118.04 A76.60 76.60 0 0 1 108.40 115.20 L108.40 135.90 A55.90 55.90 0 0 0 93.33 137.97 Z" fill="#fb8f1c"/><path d="M108.40 137.90 L108.40 113.20" stroke="#fff" stroke-width="4"/><path d="M93.87 139.89 L87.21 116.11" stroke="#fff" stroke-width="4"/><rect x="253.3" y="173.0" width="24" height="13" rx="3" fill="#ff1b33"/><text x="282.7" y="183.1" fill="#333">其他用电</text><text x="344.8" y="183.1" fill="#333" letter-spacing=".3">199.25万</text><rect x="253.3" y="197.0" width="24" height="13" rx="3" fill="#fb8f1c"/><text x="282.7" y="207.1" fill="#333">照明用电</text><text x="344.8" y="207.1" fill="#333" letter-spacing=".3">90476.17</text></svg></div>
</body></html>
